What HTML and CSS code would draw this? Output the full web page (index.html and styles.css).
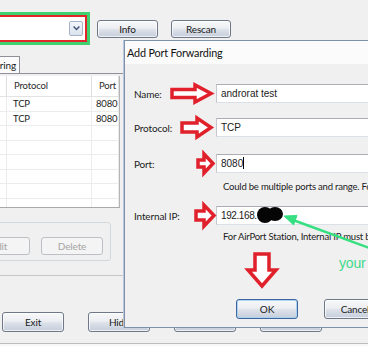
FILE: index.html
```html
<!DOCTYPE html>
<html lang="en">
<head>
    <meta charset="UTF-8">
    <meta name="viewport" content="width=device-width, initial-scale=1.0">
    <title>Port Mapper - Add Port Forwarding</title>
    <link rel="stylesheet" href="styles.css">
</head>
<body>
    <div class="window">
        <div class="toolbar">
            <div class="combo-mark">
                <div class="combo">
                    <span class="combo-drop">
                        <svg width="7" height="5" viewBox="0 0 7 5"><path d="M0.6 0.6 L3.5 3.6 L6.4 0.6" fill="none" stroke="#3e5073" stroke-width="1.4"/></svg>
                    </span>
                </div>
            </div>
            <button class="btn btn-info">Info</button>
            <button class="btn btn-rescan">Rescan</button>
        </div>

        <div class="tabs">
            <span class="tab">Port Triggering</span>
        </div>

        <div class="panel">
            <div class="grid">
                <div class="grid-head">
                    <span class="cell">Description</span>
                    <span class="cell">Protocol</span>
                    <span class="cell">Port</span>
                </div>
                <div class="grid-body">
                    <div class="grid-row"><span class="cell"></span><span class="cell">TCP</span><span class="cell">8080</span></div>
                    <div class="grid-row"><span class="cell"></span><span class="cell">TCP</span><span class="cell">8080</span></div>
                    <div class="grid-row"><span class="cell"></span><span class="cell"></span><span class="cell"></span></div>
                    <div class="grid-row"><span class="cell"></span><span class="cell"></span><span class="cell"></span></div>
                    <div class="grid-row"><span class="cell"></span><span class="cell"></span><span class="cell"></span></div>
                    <div class="grid-row"><span class="cell"></span><span class="cell"></span><span class="cell"></span></div>
                    <div class="grid-row"><span class="cell"></span><span class="cell"></span><span class="cell"></span></div>
                    <div class="grid-row"><span class="cell"></span><span class="cell"></span><span class="cell"></span></div>
                </div>
            </div>

            <div class="group">
                <button class="btn btn-off">Edit</button>
                <button class="btn btn-off">Delete</button>
            </div>
        </div>

        <div class="footer">
            <button class="btn btn-wide">Exit</button>
            <button class="btn btn-wide">Hide</button>
            <button class="btn btn-wide">About</button>
            <button class="btn btn-wide">Help</button>
        </div>
    </div>

    <div class="dialog">
        <div class="dialog-title">Add Port Forwarding</div>
        <div class="dialog-body">
            <div class="row row-name">
                <label>Name:</label>
                <div class="field">androrat test</div>
            </div>
            <div class="row row-proto">
                <label>Protocol:</label>
                <div class="field">TCP</div>
            </div>
            <div class="row row-port">
                <label>Port:</label>
                <div class="field">8080<span class="caret"></span></div>
            </div>
            <p class="hint hint-port">Could be multiple ports and range. For example: 80,8080-8089</p>
            <div class="row row-ip">
                <label>Internal IP:</label>
                <div class="field field-ip">192.168.</div>
            </div>
            <p class="hint hint-ip">For AirPort Station, Internal IP must be a local address</p>
            <div class="dialog-buttons">
                <button class="btn btn-wide btn-default">OK</button>
                <button class="btn btn-wide">Cancel</button>
            </div>
        </div>
    </div>

    <!-- annotations drawn over the screenshot -->
    <svg class="notes" width="368" height="346" viewBox="0 0 368 346">
        <g fill="#fff" stroke="#e0212b" stroke-width="3.5" stroke-linejoin="miter">
            <polygon points="172,89.5 195,89.5 195,85 211,93.5 195,102 195,97.5 172,97.5"/>
            <polygon points="182,123 197,123 197,118 211,127.5 197,137 197,132 182,132"/>
            <polygon points="198,160 204,160 204,154 213,163.5 204,173 204,167 198,167"/>
            <polygon points="196,211 204,211 204,205 214,215.5 204,226 204,220 196,220"/>
            <polygon points="255,254 269,254 269,270 276,270 262,286 248,270 255,270"/>
        </g>
        <g fill="#050505">
            <ellipse cx="265" cy="215" rx="8" ry="8"/>
            <ellipse cx="275" cy="214" rx="8" ry="7"/>
        </g>
        <g fill="#36df80" stroke="#36df80">
            <line x1="293" y1="220" x2="372" y2="249" stroke-width="2.5"/>
            <polygon points="284,216 297,215.5 293.6,224.9" stroke-width="1"/>
        </g>
    </svg>
    <span class="note-text">your</span>
</body>
</html>
```

FILE: styles.css
```css
* {
    box-sizing: border-box;
}

html,
body {
    margin: 0;
    padding: 0;
}

body {
    position: relative;
    width: 368px;
    height: 346px;
    overflow: hidden;
    background: #f7f7f7;
    font-family: 'Lato', 'Open Sans', sans-serif;
    font-size: 9.5px;
    letter-spacing: -0.15px;
    color: #1b1b1b;
}

.window {
    height: 344px;
    display: flex;
    flex-direction: column;
    background: #f0f0f0;
    border-bottom: 1px solid #bdbdbd;
    overflow: hidden;
}

/* buttons */
.btn {
    font: inherit;
    font-size: 10px;
    letter-spacing: inherit;
    color: #1b1b1b;
    height: 18px;
    padding: 0;
    border: 1px solid #6f7888;
    border-radius: 3px;
    background: linear-gradient(#f7f8fa 0%, #eceef2 45%, #dce1e9 55%, #c6cedb 100%);
    box-shadow: inset 0 0 0 1px rgba(255, 255, 255, 0.7);
    flex-shrink: 0;
}

.btn-wide {
    width: 62px;
    height: 20px;
}

.btn-off {
    width: 62px;
    border-color: #bcc0c5;
    background: #f4f4f4;
    color: #a5a5a5;
    box-shadow: none;
}

.btn-default {
    border-color: #3f65a0;
    box-shadow: inset 0 0 0 1px #a9d3f0;
}

/* toolbar */
.toolbar {
    height: 56px;
    display: flex;
    align-items: flex-start;
    padding-top: 12px;
}

.combo-mark {
    margin-left: -40px;
    width: 130px;
    height: 33px;
    border: 3px solid #3fd16f;
}

.combo {
    height: 100%;
    border: 2px solid #e2252b;
    background: #fff;
    display: flex;
    align-items: center;
    justify-content: flex-end;
    padding-right: 2px;
}

.combo-drop {
    width: 14px;
    height: 15px;
    border: 1px solid #a7b3c6;
    border-radius: 2px;
    background: linear-gradient(#f4f7fb, #d9e2ee);
    display: flex;
    align-items: center;
    justify-content: center;
}

.btn-info {
    width: 61px;
    margin: 8px 0 0 7px;
}

.btn-rescan {
    width: 60px;
    margin: 8px 0 0 13px;
}

/* tab strip */
.tabs {
    height: 17px;
    display: flex;
}

.tab {
    margin-left: -61px;
    width: 81px;
    height: 17px;
    line-height: 16px;
    font-size: 10px;
    border: 1px solid #8e9197;
    border-bottom: none;
    background: #fbfbfb;
    text-align: right;
    padding-right: 3px;
    white-space: nowrap;
    overflow: hidden;
}

.panel {
    height: 203px;
    border-top: 1px solid #8e9197;
    border-bottom: 1px solid #c6c6c6;
    padding-top: 2px;
}

/* table */
.grid {
    margin-left: -60px;
    width: 180px;
    height: 132px;
    background: #fff;
    border-right: 1px solid #b4b4b4;
    border-bottom: 1px solid #a9a9a9;
    overflow: hidden;
}

.grid-head,
.grid-row {
    display: grid;
    grid-template-columns: 67px 85px 1fr;
}

.grid-head {
    height: 21px;
    border-bottom: 1px solid #e3e3e3;
}

.grid-head .cell {
    line-height: 20px;
    padding-left: 7px;
    border-right: 1px solid #dedede;
    color: #2a2a2a;
}

.grid-body {
    height: 110px;
    overflow: hidden;
}

.grid-row {
    height: 14.5px;
    border-bottom: 1px solid #ececec;
}

.grid-row .cell {
    line-height: 13px;
    padding-left: 6px;
    border-right: 1px solid #ececec;
}

.grid-row .cell:last-child {
    padding-left: 4px;
}

.group {
    margin: 14px 0 0 -80px;
    width: 191px;
    height: 39px;
    border: 1px solid #d3d8dd;
    border-radius: 3px;
    display: flex;
    justify-content: flex-end;
    gap: 11px;
    padding: 14px 7px 0 0;
}

.footer {
    display: flex;
    gap: 24px;
    padding-left: 2px;
    margin-top: 36px;
}

/* dialog */
.dialog {
    position: absolute;
    left: 124px;
    top: 40px;
    width: 260px;
    height: 288px;
    background: #f0f0f0;
    border: 1px solid #7d91ad;
    box-shadow: -1px 0 0 #b9c7d8;
}

.dialog-title {
    height: 23px;
    line-height: 23px;
    padding-left: 2px;
    background: #fbfbfb;
    font-size: 10.8px;
    color: #111;
}

.dialog-body {
    padding: 20px 0 0 9px;
}

.row {
    display: grid;
    grid-template-columns: 82px 180px;
    align-items: center;
    height: 19px;
}

.row label {
    font-size: 10px;
    color: #222;
}

.field {
    height: 19px;
    line-height: 17px;
    padding-left: 4px;
    background: #fff;
    border: 1px solid #dbdfe6;
    border-top-color: #abadb3;
    border-left-color: #c4c7cd;
    font-family: 'Liberation Sans', Arial, sans-serif;
    font-size: 10px;
    letter-spacing: 0;
    white-space: nowrap;
}

.field-ip {
    letter-spacing: -0.4px;
}

.caret {
    display: inline-block;
    width: 1px;
    height: 12px;
    background: #000;
    vertical-align: -2px;
}

.row-proto {
    margin-top: 15px;
}

.row-port {
    margin-top: 17px;
}

.hint {
    margin: 7px 0 0 89px;
    line-height: 13px;
    letter-spacing: -0.2px;
    white-space: nowrap;
    color: #222;
}

.row-ip {
    margin-top: 13px;
}

.hint-ip {
    margin-top: 5px;
}

.dialog-buttons {
    display: flex;
    gap: 26px;
    margin: 56px 0 0 102px;
}

/* annotations */
.notes {
    position: absolute;
    left: 0;
    top: 0;
    pointer-events: none;
}

.note-text {
    position: absolute;
    left: 339px;
    top: 255px;
    font-family: 'Liberation Sans', Arial, sans-serif;
    font-size: 14px;
    color: #3fd98d;
}
```
